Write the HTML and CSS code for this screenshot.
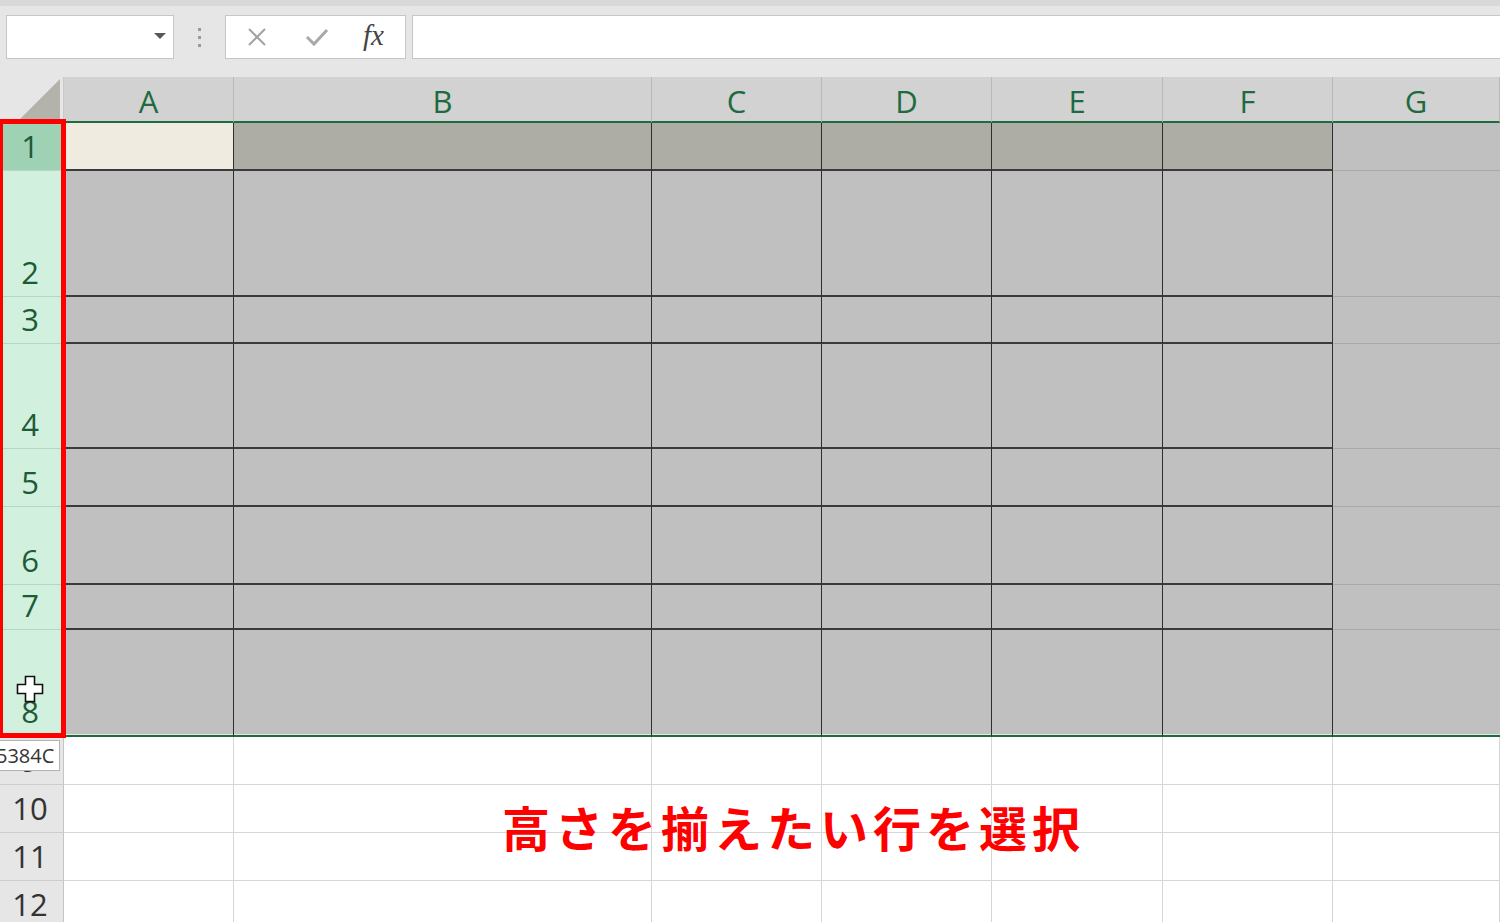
FILE: index.html
```html
<!DOCTYPE html>
<html lang="ja">
<head>
<meta charset="utf-8">
<title>Excel</title>
<link rel="stylesheet" href="styles.css">
</head>
<body>
<div class="app">
  <div class="topstrip"></div>
  <div class="fbar">
    <div class="namebox"><span class="caret"></span></div>
    <div class="dots"><i></i><i></i><i></i></div>
    <div class="fbtns">
      <svg class="ico" width="20" height="20" viewBox="0 0 20 20"><path d="M2 2L18 18M18 2L2 18" stroke="#a3a3a3" stroke-width="2" fill="none"/></svg>
      <svg class="ico" width="24" height="20" viewBox="0 0 24 20"><path d="M2 10L9 17L22 3" stroke="#a8a8a8" stroke-width="3" fill="none"/></svg>
      <span class="fx">fx</span>
    </div>
    <div class="finput"></div>
  </div>

  <div class="sheet">
    <div class="corner"><svg width="42" height="42" viewBox="0 0 42 42"><polygon points="41,1 41,41 1,41" fill="#b3b3ab"/></svg></div>
    <div class="ch">A</div><div class="ch">B</div><div class="ch">C</div><div class="ch">D</div><div class="ch">E</div><div class="ch">F</div><div class="ch">G</div>

    <div class="rh act">1</div><div class="c a"></div><div class="c d"></div><div class="c d"></div><div class="c d"></div><div class="c d"></div><div class="c d"></div><div class="c g"></div>
    <div class="rh sel">2</div><div class="c s"></div><div class="c s"></div><div class="c s"></div><div class="c s"></div><div class="c s"></div><div class="c s"></div><div class="c g"></div>
    <div class="rh sel">3</div><div class="c s"></div><div class="c s"></div><div class="c s"></div><div class="c s"></div><div class="c s"></div><div class="c s"></div><div class="c g"></div>
    <div class="rh sel">4</div><div class="c s"></div><div class="c s"></div><div class="c s"></div><div class="c s"></div><div class="c s"></div><div class="c s"></div><div class="c g"></div>
    <div class="rh sel">5</div><div class="c s"></div><div class="c s"></div><div class="c s"></div><div class="c s"></div><div class="c s"></div><div class="c s"></div><div class="c g"></div>
    <div class="rh sel">6</div><div class="c s"></div><div class="c s"></div><div class="c s"></div><div class="c s"></div><div class="c s"></div><div class="c s"></div><div class="c g"></div>
    <div class="rh sel">7</div><div class="c s"></div><div class="c s"></div><div class="c s"></div><div class="c s"></div><div class="c s"></div><div class="c s"></div><div class="c g"></div>
    <div class="rh sel last">8</div><div class="c s last"></div><div class="c s last"></div><div class="c s last"></div><div class="c s last"></div><div class="c s last"></div><div class="c s last"></div><div class="c g last"></div>
    <div class="rh">9</div><div class="c w"></div><div class="c w"></div><div class="c w"></div><div class="c w"></div><div class="c w"></div><div class="c w"></div><div class="c w"></div>
    <div class="rh">10</div><div class="c w"></div><div class="c w"></div><div class="c w"></div><div class="c w"></div><div class="c w"></div><div class="c w"></div><div class="c w"></div>
    <div class="rh">11</div><div class="c w"></div><div class="c w"></div><div class="c w"></div><div class="c w"></div><div class="c w"></div><div class="c w"></div><div class="c w"></div>
    <div class="rh">12</div><div class="c w"></div><div class="c w"></div><div class="c w"></div><div class="c w"></div><div class="c w"></div><div class="c w"></div><div class="c w"></div>

    <div class="redframe"></div>
    <div class="tooltip"><span>5384C</span></div>
    <svg class="cursor" width="28" height="28" viewBox="0 0 28 28"><polygon points="9.5,1.5 18.5,1.5 18.5,9.5 26.5,9.5 26.5,18.5 18.5,18.5 18.5,26.5 9.5,26.5 9.5,18.5 1.5,18.5 1.5,9.5 9.5,9.5" fill="#ffffff" stroke="#111111" stroke-width="1.6"/></svg>
    <div class="note">高さを揃えたい行を選択</div>
  </div>
</div>
</body>
</html>
```

FILE: styles.css
```css
html, body {
  margin: 0;
  padding: 0;
  background: #e6e6e6;
  overflow: hidden;
}
.app {
  width: 1500px;
  height: 922px;
  overflow: hidden;
  font-family: "Open Sans", "Noto Sans", sans-serif;
}
.topstrip {
  height: 6px;
  background: #d9d9d9;
}
.fbar {
  display: flex;
  align-items: center;
  height: 44px;
  margin-top: 9px;
}
.namebox {
  box-sizing: border-box;
  width: 168px;
  height: 44px;
  margin-left: 6px;
  background: #fff;
  border: 1px solid #c6c6c6;
  position: relative;
}
.caret {
  position: absolute;
  left: 147px;
  top: 17px;
  width: 0;
  height: 0;
  border-left: 6px solid transparent;
  border-right: 6px solid transparent;
  border-top: 6px solid #595959;
}
.dots {
  width: 51px;
  display: flex;
  flex-direction: column;
  align-items: center;
  gap: 5px;
}
.dots i {
  width: 3px;
  height: 3px;
  background: #9a9a9a;
  display: block;
}
.fbtns {
  box-sizing: border-box;
  width: 181px;
  height: 44px;
  background: #fff;
  border: 1px solid #c6c6c6;
  display: flex;
  align-items: center;
  padding-left: 21px;
}
.fbtns .ico:first-child { margin-right: 38px; }
.fbtns .ico:nth-child(2) { margin-right: 34px; }
.fx {
  font-family: "Liberation Serif", serif;
  font-style: italic;
  font-size: 29px;
  color: #444;
  line-height: 1;
  margin-top: -4px;
}
.finput {
  box-sizing: border-box;
  flex: 1;
  height: 44px;
  margin-left: 6px;
  margin-right: -4px;
  background: #fff;
  border: 1px solid #c6c6c6;
}
.sheet {
  position: relative;
  margin-top: 18px;
  display: grid;
  grid-template-columns: 64px 170px 418px 170px 170px 171px 170px 1fr;
  grid-template-rows: 46px 48px 126px 47px 105px 58px 78px 45px 107px 48px 48px 48px 48px;
}
.corner {
  background: #e6e6e6;
  border-right: 1px solid #c9c9c9;
  box-sizing: border-box;
  display: flex;
  align-items: flex-end;
  justify-content: flex-end;
  padding: 0 2px 3px 0;
}
.corner svg { display: block; }
.ch {
  box-sizing: border-box;
  background: #d2d2d2;
  border-right: 1px solid #b9b9b9;
  border-bottom: 2px solid #1f6b40;
  color: #1e6b41;
  font-size: 31px;
  line-height: 32px;
  display: flex;
  align-items: center;
  justify-content: center;
  padding-top: 3px;
}
.rh {
  box-sizing: border-box;
  background: #e6e6e6;
  border-right: 1px solid #c4c4c4;
  border-bottom: 1px solid #cdcdcd;
  color: #333;
  font-size: 31px;
  line-height: 32px;
  display: flex;
  align-items: flex-end;
  justify-content: center;
  padding-bottom: 8px;
  padding-right: 3px;
}
.rh.sel {
  background: #d2f0de;
  border-bottom-color: #b5d6c2;
  color: #1d5b37;
}
.rh.act {
  background: #9fd1b5;
  border-bottom-color: #b5d6c2;
  color: #1d5b37;
}
.rh.last { border-bottom: 2px solid #1f6b40; }
.c {
  box-sizing: border-box;
  border-right: 1px solid #d6d6d6;
  border-bottom: 1px solid #d6d6d6;
  background: #fff;
}
.c.s {
  background: #c0c0c0;
  border-right: 1px solid #2e2e2e;
  border-bottom: 2px solid #3a3a3a;
}
.c.d {
  background: #adada5;
  border-right: 1px solid #2e2e2e;
  border-bottom: 2px solid #3a3a3a;
}
.c.a {
  background: #efebe0;
  border-right: 1px solid #2e2e2e;
  border-bottom: 2px solid #3a3a3a;
}
.c.g {
  background: #c0c0c0;
  border-right: none;
  border-bottom: 1px solid #a9a9a9;
}
.c.last {
  border-bottom: 2px solid #1f6b40;
  box-shadow: inset 0 -1px 0 #dfe8e2;
}
.redframe {
  position: absolute;
  left: -2px;
  top: 42px;
  width: 68px;
  height: 619px;
  box-sizing: border-box;
  border: 5px solid #ff0000;
  pointer-events: none;
}
.tooltip {
  position: absolute;
  left: -1px;
  top: 663px;
  width: 61px;
  height: 31px;
  box-sizing: border-box;
  background: #fff;
  border: 1px solid #b3b3b3;
  overflow: hidden;
  font-size: 20px;
  line-height: 29px;
  color: #333;
  white-space: nowrap;
}
.tooltip span { margin-left: -4px; }
.cursor {
  position: absolute;
  left: 16px;
  top: 598px;
}
.note {
  position: absolute;
  left: 502px;
  top: 725px;
  font-family: "Noto Sans CJK JP", "Noto Sans", sans-serif;
  font-weight: 700;
  font-size: 48px;
  line-height: 1;
  letter-spacing: 5px;
  color: #ff0000;
  white-space: nowrap;
}
```
